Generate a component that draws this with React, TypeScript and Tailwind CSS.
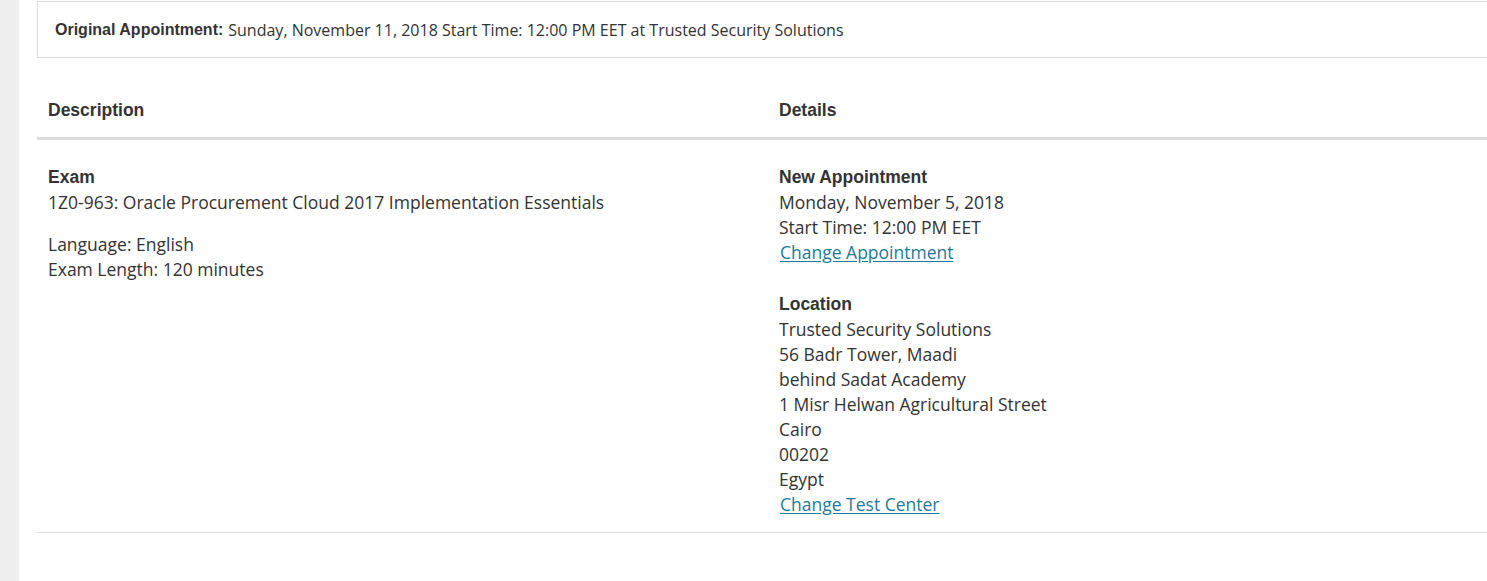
import React from "react";

const sans = "font-['Open_Sans',sans-serif]";
const arial = "font-['Liberation_Sans',Arial,sans-serif]";

export default function App() {
  return (
    <div className="flex w-[1487px] h-[581px] overflow-hidden bg-white text-[#333333]">
      <div className="w-[19px] shrink-0 bg-[#eeeeee]" />
      <div className="shrink-0 w-[1462px] ml-[18px] pt-px">
        <div className="border border-[#dddddd] h-[57px] flex items-center pl-[17px]">
          <span className={`${arial} font-bold text-[16px]`}>Original Appointment:</span>
          <span className={`${sans} text-[16px] ml-[5px]`}>
            Sunday, November 11, 2018 Start Time: 12:00 PM EET at Trusted Security Solutions
          </span>
        </div>
        <div className="mt-[21px]">
          <div className="grid grid-cols-2 border-b-[3px] border-[#dddddd] h-[61px] items-start pt-[21px]">
            <div className={`${arial} font-bold text-[17.5px] leading-[20px] pl-[11px]`}>Description</div>
            <div className={`${arial} font-bold text-[17.5px] leading-[20px] pl-[11px]`}>Details</div>
          </div>
          <div className="grid grid-cols-2 border-b border-[#dddddd] pt-[25px] pb-[15px]">
            <div className={`${sans} text-[17.5px] leading-[25px] pl-[11px]`}>
              <div className={`${arial} font-bold text-[17.5px] leading-[25px]`}>Exam</div>
              <div>1Z0-963: Oracle Procurement Cloud 2017 Implementation Essentials</div>
              <div className="mt-[17px]">Language: English</div>
              <div>Exam Length: 120 minutes</div>
            </div>
            <div className={`${sans} text-[17.5px] leading-[25px] pl-[11px]`}>
              <div className={`${arial} font-bold text-[17.5px] leading-[25px]`}>New Appointment</div>
              <div>Monday, November 5, 2018</div>
              <div>Start Time: 12:00 PM EET</div>
              <div>
                <a href="#" className="text-[#1c7a9a] underline underline-offset-2 ml-px">Change Appointment</a>
              </div>
              <div className={`${arial} font-bold text-[17.5px] leading-[25px] mt-[27px]`}>Location</div>
              <div>Trusted Security Solutions</div>
              <div>56 Badr Tower, Maadi</div>
              <div>behind Sadat Academy</div>
              <div>1 Misr Helwan Agricultural Street</div>
              <div>Cairo</div>
              <div>00202</div>
              <div>Egypt</div>
              <div>
                <a href="#" className="text-[#1c7a9a] underline underline-offset-2 ml-px">Change Test Center</a>
              </div>
            </div>
          </div>
        </div>
      </div>
    </div>
  );
}
